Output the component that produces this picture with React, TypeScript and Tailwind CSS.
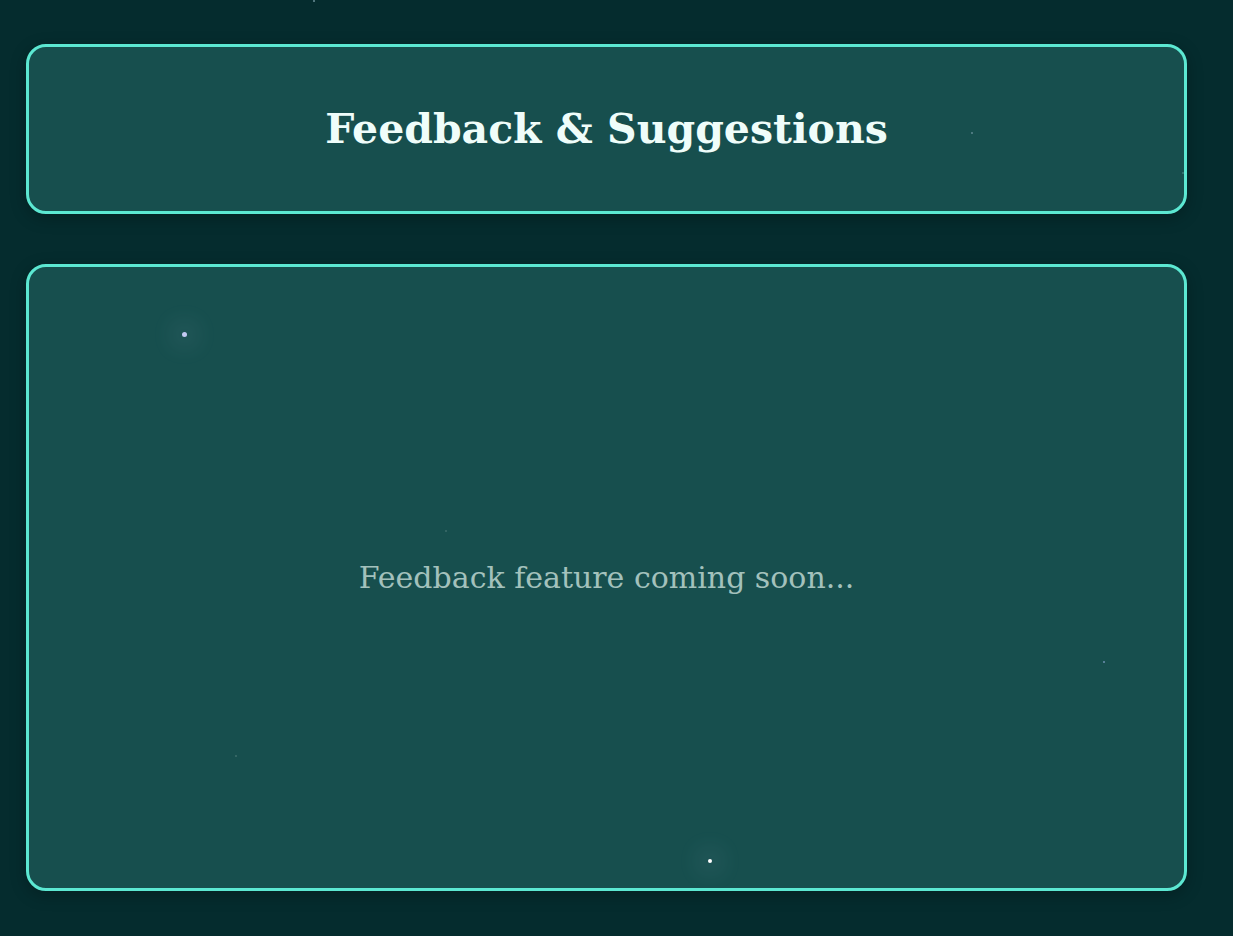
import React from "react";

const stars = [
  { x: 314, y: 1, s: 2, c: "#6b8f99", g: false },
  { x: 972, y: 133, s: 2, c: "#5f8790", g: false },
  { x: 184, y: 334, s: 5, c: "#c3c9f2", g: true },
  { x: 446, y: 531, s: 2, c: "#3d6b6b", g: false },
  { x: 1104, y: 662, s: 2, c: "#6c8fb0", g: false },
  { x: 236, y: 756, s: 2, c: "#3f6e6c", g: false },
  { x: 710, y: 861, s: 4, c: "#ffffff", g: true },
  { x: 1183, y: 173, s: 2, c: "#3f7a78", g: false },
];

export default function App() {
  return (
    <div
      className="relative min-h-[936px] w-full overflow-hidden bg-[#052c2e] pt-[44px] pl-[26px]"
      style={{ fontFamily: '"DejaVu Serif", "Liberation Serif", serif' }}
    >
      <div className="flex w-[1161px] flex-col gap-[50px]">
        <div className="flex h-[170px] items-center justify-center rounded-[20px] border-[3px] border-[#5ce8d2] bg-[#174f4e] shadow-[0_4px_16px_rgba(0,0,0,0.25)]">
          <h1 className="text-[41px] font-bold leading-none text-[#effdfa]">
            Feedback &amp; Suggestions
          </h1>
        </div>
        <div className="flex h-[627px] items-center justify-center rounded-[20px] border-[3px] border-[#5ce8d2] bg-[#174f4e] shadow-[0_4px_16px_rgba(0,0,0,0.25)]">
          <p className="text-[30px] leading-none text-[#a3c1bc]">
            Feedback feature coming soon...
          </p>
        </div>
      </div>
      {stars.map((st, i) => (
        <span
          key={i}
          className="pointer-events-none absolute rounded-full"
          style={{
            left: st.x - st.s / 2,
            top: st.y - st.s / 2,
            width: st.s,
            height: st.s,
            background: st.c,
            boxShadow: st.g ? `0 0 20px 14px rgba(200,210,255,0.05)` : undefined,
          }}
        />
      ))}
    </div>
  );
}
